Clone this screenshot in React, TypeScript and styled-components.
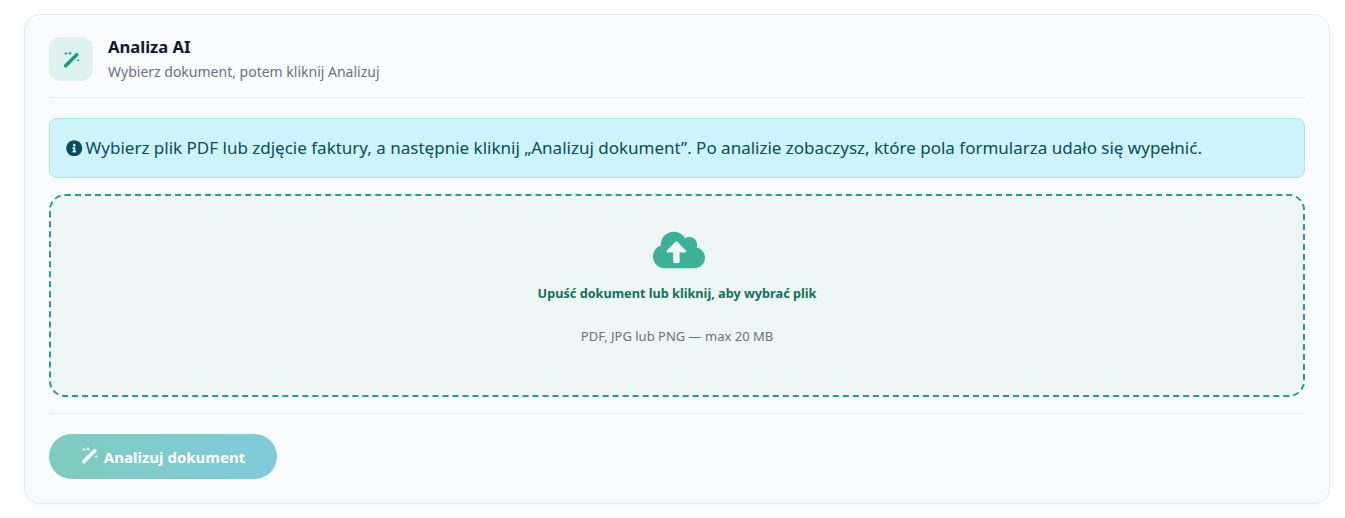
import { createGlobalStyle } from "styled-components";
import styled from "styled-components";
import { FaInfoCircle, FaCloudUploadAlt } from "react-icons/fa";

const GlobalStyle = createGlobalStyle`
  html, body {
    margin: 0;
    padding: 0;
    background: #fff;
    font-family: "Noto Sans", sans-serif;
  }
`;

const Page = styled.div`
  padding: 14px 15px 14px 24px;
`;

const Card = styled.div`
  box-sizing: border-box;
  height: 490px;
  padding: 22px 24px;
  background: #fafbfd;
  border: 1px solid #e8eaee;
  border-radius: 16px;
  box-shadow: 0 2px 10px rgba(20, 30, 60, 0.03);
`;

const Header = styled.div`
  display: flex;
  gap: 15px;
  padding-bottom: 16px;
  border-bottom: 1px solid #e6e8ec;
  margin-bottom: 20px;
`;

const HeaderIcon = styled.div`
  width: 44px;
  height: 44px;
  border-radius: 12px;
  background: #dff1f1;
  color: #1f9c84;
  display: flex;
  align-items: center;
  justify-content: center;
`;

const Title = styled.div`
  font-size: 16.6px;
  font-weight: 700;
  line-height: 22px;
  margin-top: -1px;
  color: #111730;
`;

const Subtitle = styled.div`
  font-size: 14px;
  line-height: 19px;
  margin-top: 4px;
  color: #6b7180;
`;

const Alert = styled.div`
  box-sizing: border-box;
  height: 60px;
  padding: 0 16px 2px;
  display: flex;
  align-items: center;
  gap: 3px;
  background: #cdf4fb;
  border: 1px solid #a5e6f3;
  border-radius: 8px;
  color: #0a4c5c;
  font-size: 17px;
  white-space: nowrap;
  svg {
    font-size: 16.5px;
    margin-top: 2px;
    flex: none;
  }
`;

const DropZone = styled.div`
  box-sizing: border-box;
  height: 203px;
  margin-top: 16px;
  padding-top: 34px;
  display: flex;
  flex-direction: column;
  align-items: center;
  background: #edf6f5;
  border: 2px dashed #229f87;
  border-radius: 16px;
`;

const CloudIcon = styled.div`
  color: #3db098;
  font-size: 52px;
  line-height: 0;
  height: 40px;
  margin-left: 3px;
  display: flex;
  align-items: center;
`;

const DropTitle = styled.div`
  margin-top: 14px;
  font-size: 12.7px;
  font-weight: 700;
  line-height: 18px;
  color: #11705f;
`;

const DropHint = styled.div`
  margin-top: 25px;
  font-size: 13px;
  line-height: 18px;
  color: #6b7180;
`;

const Footer = styled.div`
  margin-top: 16px;
  padding-top: 20px;
  border-top: 1px solid #e6e8ec;
`;

const AnalyzeButton = styled.button`
  box-sizing: border-box;
  width: 228px;
  height: 45px;
  border: 0;
  border-radius: 23px;
  display: flex;
  align-items: center;
  justify-content: center;
  gap: 5px;
  background: linear-gradient(90deg, #7fcbbd, #7fcbdc);
  color: #fff;
  font-family: inherit;
  font-size: 15px;
  font-weight: 700;
  svg {
    margin-right: 1px;
    margin-top: -2px;
  }
`;

function WandIcon() {
  return (
    <svg width="17" height="17" viewBox="0 0 18 18" fill="currentColor" aria-hidden="true">
      <path d="M3 15.5 11.8 6.7" stroke="currentColor" strokeWidth="3.8" strokeLinecap="round" />
      <path d="M12.9 5.6 14.6 3.9" stroke="currentColor" strokeWidth="3.8" strokeLinecap="round" />
      <path d="M2.6 1.2h1v1h1v1h-1v1h-1v-1h-1v-1h1zM7 .6h1v1.2h1.2v1H8V4H7V2.800H5.800v-1H7zM15.6 8.500h.9v.9h.9v.9h-.9v.9h-.9v-.9h-.9v-.9h.9z" />
    </svg>
  );
}

export default function App() {
  return (
    <Page>
      <GlobalStyle />
      <Card>
        <Header>
          <HeaderIcon>
            <WandIcon />
          </HeaderIcon>
          <div>
            <Title>Analiza AI</Title>
            <Subtitle>Wybierz dokument, potem kliknij Analizuj</Subtitle>
          </div>
        </Header>
        <Alert>
          <FaInfoCircle />
          <span>
            Wybierz plik PDF lub zdjęcie faktury, a następnie kliknij „Analizuj dokument”. Po analizie
            zobaczysz, które pola formularza udało się wypełnić.
          </span>
        </Alert>
        <DropZone>
          <CloudIcon>
            <FaCloudUploadAlt />
          </CloudIcon>
          <DropTitle>Upuść dokument lub kliknij, aby wybrać plik</DropTitle>
          <DropHint>PDF, JPG lub PNG — max 20 MB</DropHint>
        </DropZone>
        <Footer>
          <AnalyzeButton>
            <WandIcon />
            Analizuj dokument
          </AnalyzeButton>
        </Footer>
      </Card>
    </Page>
  );
}
